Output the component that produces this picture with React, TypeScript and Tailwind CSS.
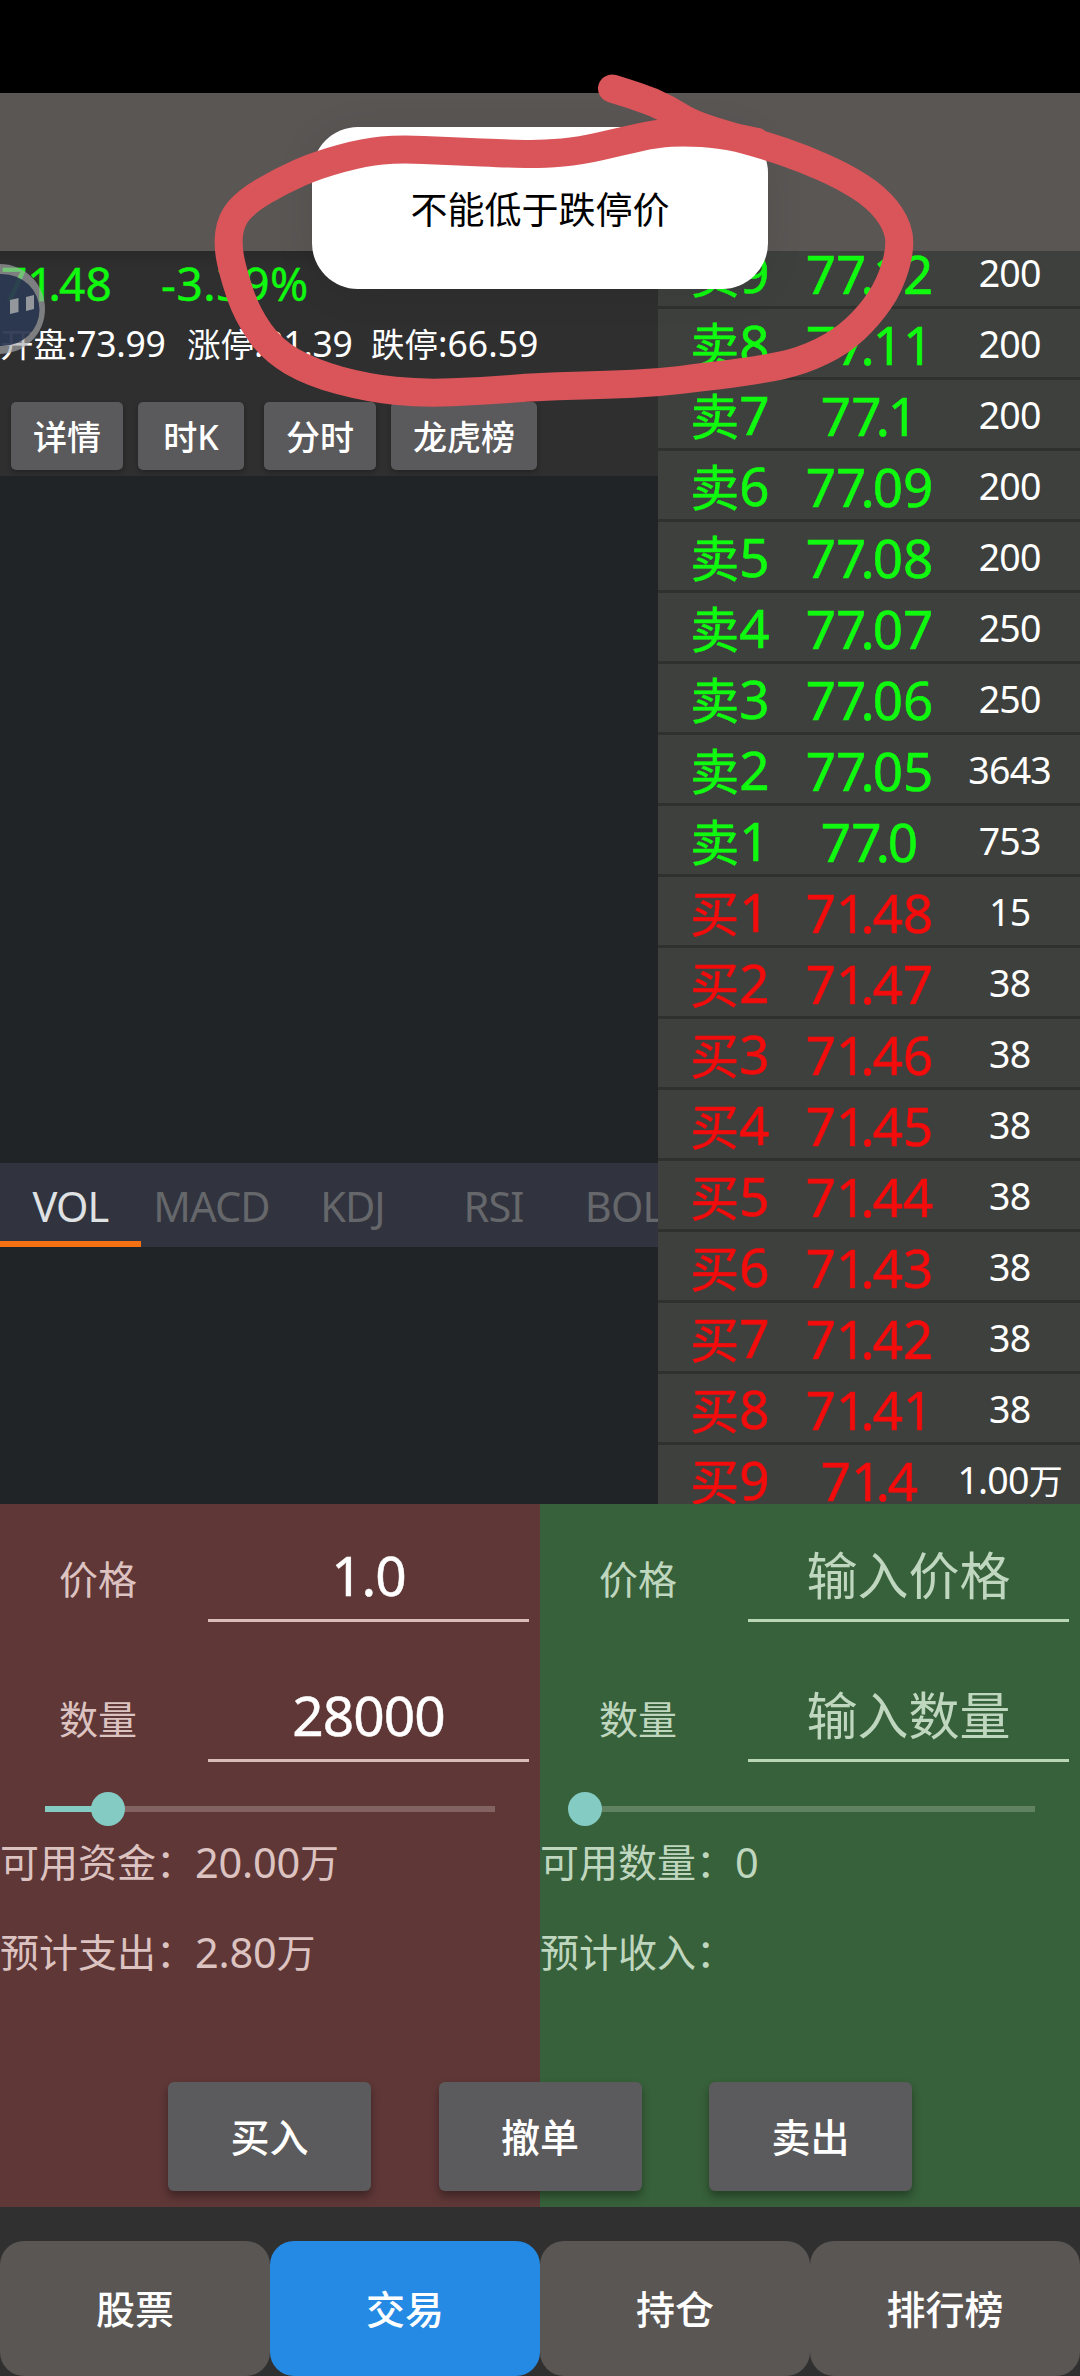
import React from "react";

type Level = { label: string; no: string; price: string; volume: string };

const asks: Level[] = [
  { label: "卖", no: "9", price: "77.12", volume: "200" },
  { label: "卖", no: "8", price: "77.11", volume: "200" },
  { label: "卖", no: "7", price: "77.1", volume: "200" },
  { label: "卖", no: "6", price: "77.09", volume: "200" },
  { label: "卖", no: "5", price: "77.08", volume: "200" },
  { label: "卖", no: "4", price: "77.07", volume: "250" },
  { label: "卖", no: "3", price: "77.06", volume: "250" },
  { label: "卖", no: "2", price: "77.05", volume: "3643" },
  { label: "卖", no: "1", price: "77.0", volume: "753" },
];

const bids: Level[] = [
  { label: "买", no: "1", price: "71.48", volume: "15" },
  { label: "买", no: "2", price: "71.47", volume: "38" },
  { label: "买", no: "3", price: "71.46", volume: "38" },
  { label: "买", no: "4", price: "71.45", volume: "38" },
  { label: "买", no: "5", price: "71.44", volume: "38" },
  { label: "买", no: "6", price: "71.43", volume: "38" },
  { label: "买", no: "7", price: "71.42", volume: "38" },
  { label: "买", no: "8", price: "71.41", volume: "38" },
  { label: "买", no: "9", price: "71.4", volume: "1.00万" },
];

// Sets a price with the decimal point tucked under the preceding digit.
function Price({ value }: { value: string }) {
  const dot = value.indexOf(".");
  return (
    <>
      {value.slice(0, dot - 1)}
      <span className="tracking-[-0.11em]">{value[dot - 1]}</span>
      <span className="tracking-[-0.04em]">.</span>
      {value.slice(dot + 1)}
    </>
  );
}

function BookRow({ level, color }: { level: Level; color: string }) {
  return (
    <div className="grid h-[71px] shrink-0 grid-cols-3 items-center border-b-[3px] border-[#2f312f] pt-[2px] text-center whitespace-nowrap">
      <div className={"pt-[2px] pl-[3px] text-[49px] leading-[60px] [-webkit-text-stroke:0.6px_currentColor] " + color}>
        {level.label}
        <span className="text-[53px] leading-none">{level.no}</span>
      </div>
      <div className={"pt-[2px] pl-px text-[53px] leading-[60px] [-webkit-text-stroke:0.6px_currentColor] " + color}>
        <Price value={level.price} />
      </div>
      <div className="text-[37.5px] leading-[60px] tracking-[-0.8px] text-white">
        {level.volume.replace("万", "")}
        {level.volume.endsWith("万") && <span className="text-[34px] leading-none">万</span>}
      </div>
    </div>
  );
}

function SmallButton({ children, className }: { children: React.ReactNode; className: string }) {
  return (
    <button
      className={
        "flex h-[68px] items-center justify-center rounded-[5px] bg-[#5a595b] pt-[2px] text-[34px] leading-none font-medium text-white shadow-[0_2px_5px_rgba(0,0,0,0.3)] " +
        className
      }
    >
      {children}
    </button>
  );
}

function Field({ label, value, line, muted }: { label: string; value: string; line: string; muted: boolean }) {
  return (
    <div className="flex h-[140px] pr-[11px]">
      <div className="w-[208px] pt-[48px] pl-[59px] text-[39px] leading-[54px]">{label}</div>
      <div className={"h-[118px] flex-1 border-b-[3px] pt-[36px] text-center leading-[70px] " + line}>
        <span
          className={
            muted ? "text-[51px]" : "text-[55px] tracking-[-1px] text-white [-webkit-text-stroke:0.5px_currentColor]"
          }
        >
          {value}
        </span>
      </div>
    </div>
  );
}

function Slider({ value, track }: { value: number; track: string }) {
  return (
    <div className="flex h-[48px] items-center pt-[2px] pr-[45px] pl-[45px]">
      <div className={"relative h-[6px] w-full " + track}>
        <div className="h-full bg-[#84cbc4]" style={{ width: `${value}%` }} />
        <div
          className="absolute top-1/2 size-[34px] -translate-x-1/2 -translate-y-1/2 rounded-full bg-[#84cbc4]"
          style={{ left: `${value}%` }}
        />
      </div>
    </div>
  );
}

function ActionButton({ children }: { children: React.ReactNode }) {
  return (
    <button className="flex h-[109px] w-[203px] items-center justify-center rounded-[6px] bg-[#5b5a5c] text-[39px] leading-none font-medium text-white shadow-[0_5px_8px_rgba(0,0,0,0.35)]">
      {children}
    </button>
  );
}

function NavButton({ children, active }: { children: React.ReactNode; active?: boolean }) {
  return (
    <button
      className={
        "flex h-[135px] items-center justify-center rounded-[24px] text-[39px] leading-none font-medium text-white " +
        (active ? "bg-[#248ae3]" : "bg-[#5a5654]")
      }
    >
      {children}
    </button>
  );
}

function FloatingBall() {
  return (
    <svg className="absolute top-[260px] left-0 h-[100px] w-[50px]" viewBox="0 0 50 100">
      <circle cx="0" cy="49" r="45" fill="#a6a9ac" fillOpacity="0.65" />
      <ellipse cx="2" cy="50" rx="37.500" ry="36" fill="#1f2c48" fillOpacity="0.85" />
      <path d="M10 40 L18.500 38 V52 L10 54 Z" fill="#94979c" />
      <path d="M26 37 L34 35 V49 L26 51 Z" fill="#94979c" />
    </svg>
  );
}

const stroke: [number, number][] = [
  [612, 88.5], [643, 98], [668, 109], [688, 122], [719, 133], [764, 145], [802, 158], [843, 176], [876, 197],
  [896, 222], [901, 247], [890, 285], [869, 316], [841, 342], [802, 361], [760, 370], [705, 377], [657, 382.6],
  [609, 385], [540, 386.7], [482, 391], [422, 393.5], [368, 388], [312, 373], [272, 350], [247, 314], [234, 276],
  [227.5, 246], [231, 220], [247, 201], [281, 181], [317, 165], [365, 152], [399, 149], [448, 151], [516, 154],
  [545, 154], [580, 151], [623, 141], [657, 133.5], [685, 132], [719, 134], [757, 142],
];

// Joins the midpoints of the sampled points with quadratic curves.
function smooth(points: [number, number][]) {
  let d = `M${points[0][0]} ${points[0][1]}`;
  for (let i = 1; i < points.length - 1; i++) {
    const [x, y] = points[i];
    const [nx, ny] = points[i + 1];
    d += ` Q${x} ${y} ${(x + nx) / 2} ${(y + ny) / 2}`;
  }
  const last = points[points.length - 1];
  return d + ` L${last[0]} ${last[1]}`;
}

function Marker() {
  return (
    <svg className="pointer-events-none absolute top-0 left-0 h-[450px] w-[1080px]" viewBox="0 0 1080 450">
      <path d={smooth(stroke)} fill="none" stroke="#d9555a" strokeWidth="28" strokeLinecap="round" strokeLinejoin="round" />
    </svg>
  );
}

const tabs = ["VOL", "MACD", "KDJ", "RSI", "BOLL"];

export default function App() {
  return (
    <div className="relative flex h-[2376px] w-[1080px] flex-col overflow-hidden bg-[#303030] font-['Noto_Sans','Noto_Sans_CJK_SC',sans-serif]">
      <div className="h-[93px] shrink-0 bg-black" />
      <div className="h-[158px] shrink-0 bg-[#5a5654]" />

      <div className="flex h-[1253px] shrink-0">
        <div className="flex w-[658px] flex-col overflow-hidden bg-[#202427]">
          <div className="flex h-[225px] shrink-0 flex-col bg-[#2f2f2f] bg-linear-to-b from-[#292929] to-[#2f2f2f] to-[8%]">
            <div className="flex h-[64px] items-center whitespace-nowrap text-[#10fa10] [-webkit-text-stroke:0.4px_currentColor]">
              <div className="w-[161px] pl-px text-[46px] leading-none">
                <Price value="71.48" />
              </div>
              <div className="text-[46px] leading-none tracking-[0.6px]">-3.39%</div>
            </div>
            <div className="flex h-[57px] items-center text-[33.5px] leading-none whitespace-nowrap text-white">
              <div className="w-[187px]">
                开盘<span className="text-[35.5px] leading-none tracking-[-0.3px]">:73.99</span>
              </div>
              <div className="w-[184px]">
                涨停<span className="text-[35.5px] leading-none tracking-[-0.3px]">:81.39</span>
              </div>
              <div>
                跌停<span className="text-[35.5px] leading-none">:66.59</span>
              </div>
            </div>
            <div className="mt-[30px] flex pl-[11px]">
              <SmallButton className="w-[112px]">详情</SmallButton>
              <SmallButton className="ml-[15px] w-[106px]">时K</SmallButton>
              <SmallButton className="ml-[20px] w-[112px]">分时</SmallButton>
              <SmallButton className="ml-[15px] w-[146px]">龙虎榜</SmallButton>
            </div>
          </div>

          <div className="h-[687px] shrink-0" />

          <div className="flex h-[84px] shrink-0 bg-[#31343e]">
            {tabs.map((tab, i) => (
              <div
                key={tab}
                className={
                  "flex w-[141px] shrink-0 items-center justify-center border-b-[6px] pt-[9px] text-[41.5px] leading-none tracking-[-0.9px] " +
                  (i === 0 ? "border-[#f37013] text-[#dfe1e3]" : "border-transparent text-[#65676b]")
                }
              >
                {tab}
              </div>
            ))}
          </div>
        </div>

        <div className="h-[1253px] flex-1 overflow-hidden bg-[#3d403d]">
          <div className="-mt-[13px] flex flex-col">
            {asks.map((level) => (
              <BookRow key={level.no} level={level} color="text-[#10fa10]" />
            ))}
            {bids.map((level) => (
              <BookRow key={level.no} level={level} color="text-[#f20c0c]" />
            ))}
          </div>
        </div>
      </div>

      <div className="relative grid h-[703px] shrink-0 grid-cols-2">
        <div className="bg-[#5f3737] text-[#dcc3c1]">
          <Field label="价格" value="1.0" line="border-[#dcbcb7]" muted={false} />
          <Field label="数量" value="28000" line="border-[#dcbcb7]" muted={false} />
          <Slider value={14} track="bg-[#826361]" />
          <div className="flex h-[90px] items-start pt-[3px] text-[39px] leading-[54px] whitespace-nowrap">
            可用资金：<span className="text-[41.5px] tracking-[-0.2px]">20.00</span>万
          </div>
          <div className="flex h-[90px] items-start pt-[3px] text-[39px] leading-[54px] whitespace-nowrap">
            预计支出：<span className="text-[41.5px] tracking-[-0.2px]">2.80</span>万
          </div>
        </div>
        <div className="bg-[#37613a] text-[#bfd6bf]">
          <Field label="价格" value="输入价格" line="border-[#b9d6b7]" muted />
          <Field label="数量" value="输入数量" line="border-[#b9d6b7]" muted />
          <Slider value={0} track="bg-[#608261]" />
          <div className="flex h-[90px] items-start pt-[3px] text-[39px] leading-[54px] whitespace-nowrap">
            可用数量：<span className="text-[41.5px]">0</span>
          </div>
          <div className="flex h-[90px] items-start pt-[3px] text-[39px] leading-[54px] whitespace-nowrap">预计收入：</div>
        </div>
        <div className="absolute inset-x-0 bottom-[16px] flex justify-center gap-[67.5px]">
          <ActionButton>买入</ActionButton>
          <ActionButton>撤单</ActionButton>
          <ActionButton>卖出</ActionButton>
        </div>
      </div>

      <div className="mt-[34px] grid shrink-0 grid-cols-4">
        <NavButton>股票</NavButton>
        <NavButton active>交易</NavButton>
        <NavButton>持仓</NavButton>
        <NavButton>排行榜</NavButton>
      </div>

      <FloatingBall />
      <div className="absolute top-[127px] left-[312px] flex h-[162px] w-[456px] items-center justify-center rounded-[46px] bg-white pt-[3px] text-[37px] leading-none text-black shadow-[0_4px_40px_rgba(0,0,0,0.08)]">
        不能低于跌停价
      </div>
      <Marker />
    </div>
  );
}
